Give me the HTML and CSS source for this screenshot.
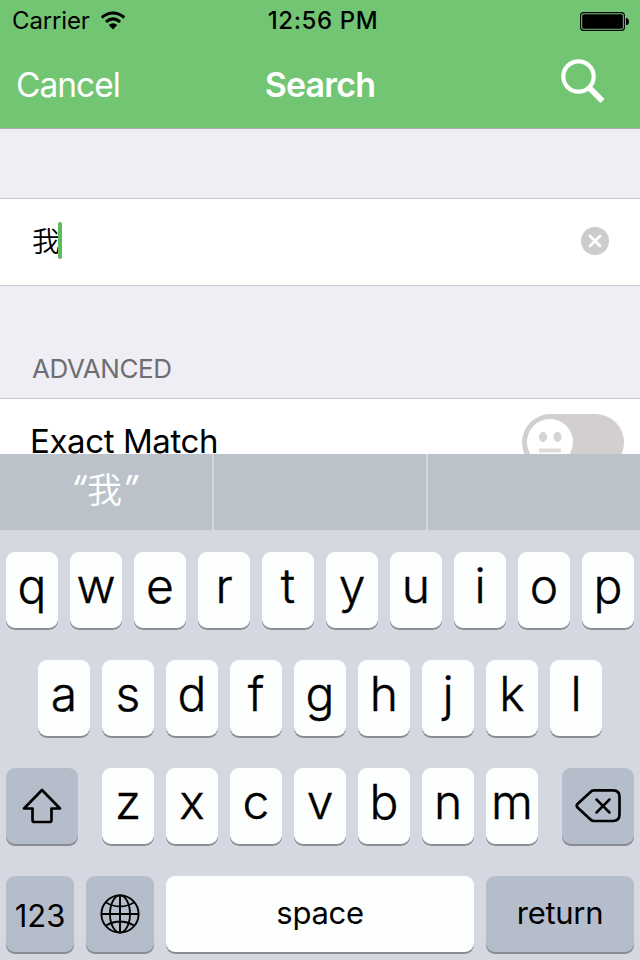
FILE: index.html
```
<!DOCTYPE html>
<html lang="en">
<head>
<meta charset="utf-8">
<title>Search</title>
<link rel="stylesheet" href="styles.css">
</head>
<body>
<div class="screen">
  <header class="header">
    <div class="status">
      <div class="carrier"><span>Carrier</span>
        <svg class="wifi" width="26" height="20" viewBox="0 0 26 20"><g fill="none" stroke="#000" stroke-width="3"><path d="M1.700 6.500Q13 -2.500 24.300 6.500"/><path d="M5.900 10.800Q13 5 20.100 10.800"/></g><path d="M8.700 14.100Q13 10.300 17.300 14.100L13 18.400Z"/></svg>
      </div>
      <span class="clock">12:56 PM</span>
      <svg class="battery" width="50" height="20" viewBox="0 0 50 20"><rect x=".6" y=".6" width="43.800" height="17.800" rx="3" fill="none" stroke="#000" stroke-width="1.100"/><rect x="2.200" y="2.200" width="40.600" height="14.600" rx="1.500"/><path d="M46 6h1q2 1 2 3.500t-2 3.500h-1z"/></svg>
    </div>
    <nav class="nav">
      <span class="cancel">Cancel</span>
      <h1 class="title">Search</h1>
      <svg class="magnifier" width="44" height="46" viewBox="0 0 44 46"><g fill="none" stroke="#fff"><circle cx="17.500" cy="18.500" r="15.200" stroke-width="4.200"/><path d="M27.500 29L41.500 43" stroke-width="5.800"/></g></svg>
    </nav>
  </header>
  <main class="content">
    <div class="field"><span class="query">我</span><i class="caret"></i>
      <svg class="clear" width="28" height="28" viewBox="0 0 28 28"><circle cx="14" cy="14" r="14" fill="#ccc"/><path d="M9 9l10 10M19 9L9 19" stroke="#fff" stroke-width="2.700" stroke-linecap="round"/></svg>
    </div>
    <h2 class="section">ADVANCED</h2>
    <div class="option"><span class="label">Exact Match</span>
      <svg class="switch" width="102" height="62" viewBox="0 0 102 62"><rect width="102" height="57" rx="28.500" fill="#d3cfce"/><circle cx="28" cy="28" r="23" fill="#fff"/><g fill="#d6d3d2"><ellipse cx="21" cy="23" rx="4" ry="5"/><ellipse cx="35.500" cy="23" rx="4" ry="5"/></g><path d="M17 36.500h22" stroke="#dedcdb" stroke-width="4"/></svg>
    </div>
  </main>
  <section class="keyboard">
    <div class="suggestions"><span class="suggestion"><span class="quote">“</span>我<span class="quote">”</span></span><span class="suggestion"></span><span class="suggestion"></span></div>
    <div class="keys">
      <div class="row"><b class="key">q</b><b class="key">w</b><b class="key">e</b><b class="key">r</b><b class="key">t</b><b class="key">y</b><b class="key">u</b><b class="key">i</b><b class="key">o</b><b class="key">p</b></div>
      <div class="row"><b class="key">a</b><b class="key">s</b><b class="key">d</b><b class="key">f</b><b class="key">g</b><b class="key">h</b><b class="key">j</b><b class="key">k</b><b class="key">l</b></div>
      <div class="row spread">
        <b class="key dark wide"><svg width="40" height="36" viewBox="0 0 40 36"><path d="M20 2L38 20.500H29.500V32Q29.500 34 27.500 34H12.500Q10.500 34 10.500 32V20.500H2Z" fill="none" stroke="#000" stroke-width="2.700" stroke-linejoin="round"/></svg></b>
        <div class="row"><b class="key">z</b><b class="key">x</b><b class="key">c</b><b class="key">v</b><b class="key">b</b><b class="key">n</b><b class="key">m</b></div>
        <b class="key dark wide"><svg width="46" height="36" viewBox="0 0 46 36"><g fill="none" stroke="#000" stroke-linecap="round" stroke-linejoin="round" stroke-width="2.700"><path d="M19 2.300H38Q44.500 2.300 44.500 8.500V26.500Q44.500 33 38 33H19Q17 33 15.500 31.500L2.500 19.500Q1 17.700 2.500 16L15.500 4Q17 2.300 19 2.300Z"/><path d="M21.500 11.500L34.500 24.500M34.500 11.500L21.500 24.500" stroke-width="2.500"/></g></svg></b>
      </div>
      <div class="row">
        <b class="key dark text numbers">123</b>
        <b class="key dark globe"><svg width="40" height="40" viewBox="0 0 40 40"><g fill="none" stroke="#000" stroke-width="1.900"><circle cx="20" cy="20" r="18.600"/><ellipse cx="20" cy="20" rx="10" ry="18.600"/><path d="M20 1v38M1 20h38M6 8.500Q20 16.500 34 8.500M6 31.500Q20 23.500 34 31.500"/></g></svg></b>
        <b class="key text space">space</b>
        <b class="key dark text return">return</b>
      </div>
    </div>
  </section>
</div>
</body>
</html>
```
FILE: styles.css
```
* { box-sizing: border-box; }
body { margin: 0; font-family: Inter, "Noto Sans CJK SC", sans-serif; color: #000; }
svg { display: block; flex: none; }
.screen { width: 640px; height: 960px; overflow: hidden; display: flex; flex-direction: column; background: #efeef4; }
.header { height: 129px; flex: none; background: #72c673; border-bottom: 1px solid #b0acb1; }
.status { height: 40px; line-height: 42px; font-size: 24px; display: grid; grid-template-columns: 1fr auto 1fr; align-items: center; padding: 0 11px 0 12px; }
.carrier { display: flex; align-items: center; gap: 10px; letter-spacing: -0.15px; }
.wifi { margin: -1px 0 0 0; }
.clock { font-weight: 500; letter-spacing: 0.6px; padding-left: 5px; }
.battery { justify-self: end; margin: 1px -1px 0 0; }
.nav { height: 88px; line-height: 89px; color: #fff; font-size: 34px; display: grid; grid-template-columns: 1fr auto 1fr; padding: 0 16px; }
.cancel { font-size: 33.5px; line-height: 90px; letter-spacing: -1px; }
.title { margin: 0; font-size: 34px; font-weight: 600; letter-spacing: -0.8px; }
.magnifier { justify-self: end; margin: 18px 19px 0 0; }
.content { height: 325px; flex: none; overflow: hidden; padding-top: 69px; }
.field { height: 88px; display: flex; align-items: center; background: #fff; border: solid #c8c7cc; border-width: 1px 0; padding: 0 31px 0 32px; }
.query { font: 350 28px/40px "Noto Sans CJK SC", sans-serif; width: 26px; margin-top: -5px; }
.caret { width: 4px; height: 37px; border-radius: 2px; background: #5dbd5e; margin-top: -3px; }
.clear { margin-left: auto; margin-top: -2px; }
.section { height: 112px; margin: 0; padding: 63px 32px 0; font-size: 26px; line-height: 40px; font-weight: 400; letter-spacing: -0.4px; color: #6d6d72; }
.option { height: 88px; display: flex; align-items: flex-start; justify-content: space-between; background: #fff; border-top: 1px solid #c8c7cc; padding: 0 16px 0 30px; }
.label { font-size: 33px; line-height: 85px; letter-spacing: -0.4px; }
.switch { margin-top: 15px; }
.keyboard { height: 506px; flex: none; background: #d5d8e1; }
.suggestions { height: 76px; display: grid; grid-template-columns: 212px 212px 1fr; gap: 2px; background: #d5d8e1; }
.suggestion { background: #bbc2ca; color: #fff; font: 350 35px/68px "Noto Sans CJK SC", sans-serif; display: flex; justify-content: center; padding-right: 3px; }
.quote { font-family: Inter, sans-serif; font-style: italic; font-weight: 400; }
.keys { padding: 22px 6px 0; display: flex; flex-direction: column; gap: 30px; }
.row { display: flex; justify-content: center; gap: 12px; }
.spread { justify-content: space-between; }
.key { width: 52px; height: 78px; flex: none; border-radius: 9px; background: #fdfefe; box-shadow: inset 0 -2px 0 #898b90; font-weight: 300; -webkit-text-stroke: 0.4px #000; font-size: 48px; line-height: 67px; text-align: center; }
.dark { background: #b6bdca; display: flex; justify-content: center; align-items: center; }
.wide { width: 72px; }
.wide svg, .globe svg { margin-top: -2px; }
.text { display: block; font-size: 31px; line-height: 73px; font-weight: 400; letter-spacing: -0.3px; -webkit-text-stroke: 0; }
.numbers, .globe { width: 68px; }
.numbers { line-height: 79px; letter-spacing: 0; }
.space { width: 308px; }
.return { width: 148px; }
```
